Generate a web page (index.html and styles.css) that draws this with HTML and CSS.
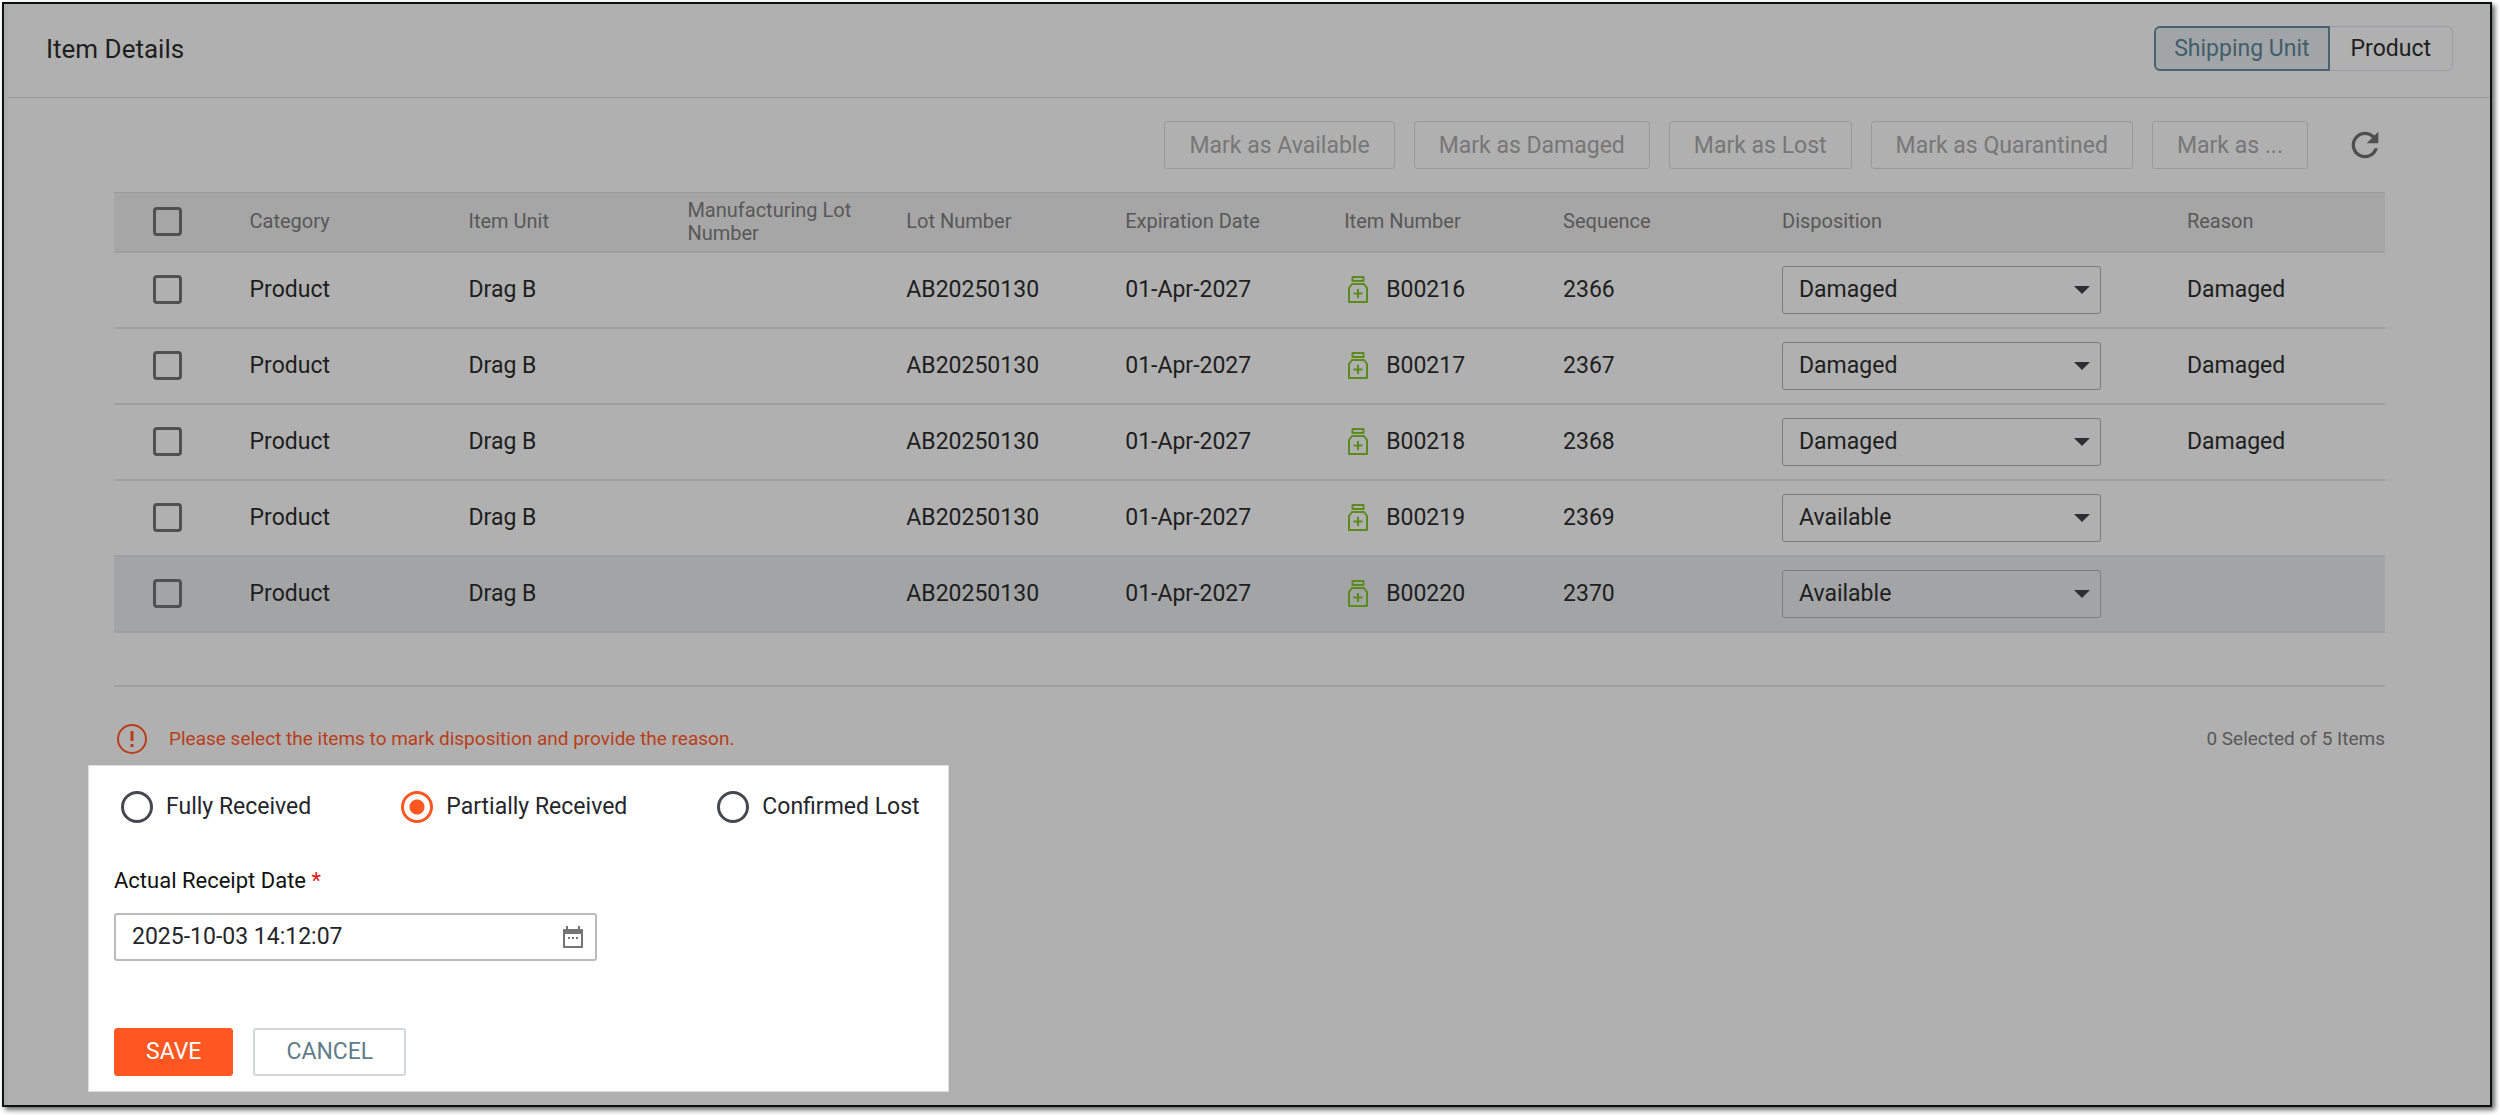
FILE: index.html
```html
<!DOCTYPE html>
<html lang="en">
<head>
    <meta charset="UTF-8">
    <meta name="viewport" content="width=device-width, initial-scale=1.0">
    <title>Item Details</title>
    <link rel="stylesheet" href="styles.css">
</head>
<body>
    <!-- shared icon for the item number column -->
    <svg width="0" height="0" class="icon-defs" aria-hidden="true">
        <symbol id="bottle" viewBox="0 1 28 28">
            <path d="M8.500 2h11v4h-11z M8 9h12l3 4v14H5V13z" fill="none" stroke="currentColor" stroke-width="2" stroke-linejoin="round"/>
            <path d="M14 14v9M9.500 18.500h9" fill="none" stroke="currentColor" stroke-width="2"/>
        </symbol>
    </svg>

    <div class="window">
        <header class="header">
            <h1>Item Details</h1>
            <div class="toggle">
                <button type="button" class="toggle-button active">Shipping Unit</button>
                <button type="button" class="toggle-button">Product</button>
            </div>
        </header>

        <main class="content">
            <div class="toolbar">
                <button type="button" class="mark-button" disabled>Mark as Available</button>
                <button type="button" class="mark-button" disabled>Mark as Damaged</button>
                <button type="button" class="mark-button" disabled>Mark as Lost</button>
                <button type="button" class="mark-button" disabled>Mark as Quarantined</button>
                <button type="button" class="mark-button" disabled>Mark as ...</button>
                <button type="button" class="refresh" aria-label="Refresh">
                    <svg width="40" height="40" viewBox="0 0 24 24"><path d="M17.650 6.350A7.958 7.958 0 0 0 12 4c-4.420 0-7.990 3.580-7.990 8s3.570 8 7.990 8c3.730 0 6.840-2.550 7.730-6h-2.080A5.990 5.990 0 0 1 12 18c-3.310 0-6-2.690-6-6s2.690-6 6-6c1.660 0 3.140.690 4.220 1.780L13 11h7V4z" fill="currentColor"/></svg>
                </button>
            </div>

            <table class="items">
                <colgroup>
                    <col class="col-check">
                    <col span="7" class="col-text">
                    <col class="col-disposition">
                    <col>
                </colgroup>
                <thead>
                    <tr>
                        <th><input type="checkbox" class="check" aria-label="Select all"></th>
                        <th>Category</th>
                        <th>Item Unit</th>
                        <th>Manufacturing Lot Number</th>
                        <th>Lot Number</th>
                        <th>Expiration Date</th>
                        <th>Item Number</th>
                        <th>Sequence</th>
                        <th>Disposition</th>
                        <th>Reason</th>
                    </tr>
                </thead>
                <tbody>
                    <tr>
                        <td><input type="checkbox" class="check" aria-label="Select B00216"></td>
                        <td>Product</td>
                        <td>Drag B</td>
                        <td></td>
                        <td>AB20250130</td>
                        <td>01-Apr-2027</td>
                        <td><span class="item-number"><svg width="28" height="28"><use href="#bottle"/></svg>B00216</span></td>
                        <td>2366</td>
                        <td><select class="disposition" aria-label="Disposition of B00216"><option selected>Damaged</option><option>Available</option></select></td>
                        <td>Damaged</td>
                    </tr>
                    <tr>
                        <td><input type="checkbox" class="check" aria-label="Select B00217"></td>
                        <td>Product</td>
                        <td>Drag B</td>
                        <td></td>
                        <td>AB20250130</td>
                        <td>01-Apr-2027</td>
                        <td><span class="item-number"><svg width="28" height="28"><use href="#bottle"/></svg>B00217</span></td>
                        <td>2367</td>
                        <td><select class="disposition" aria-label="Disposition of B00217"><option selected>Damaged</option><option>Available</option></select></td>
                        <td>Damaged</td>
                    </tr>
                    <tr>
                        <td><input type="checkbox" class="check" aria-label="Select B00218"></td>
                        <td>Product</td>
                        <td>Drag B</td>
                        <td></td>
                        <td>AB20250130</td>
                        <td>01-Apr-2027</td>
                        <td><span class="item-number"><svg width="28" height="28"><use href="#bottle"/></svg>B00218</span></td>
                        <td>2368</td>
                        <td><select class="disposition" aria-label="Disposition of B00218"><option selected>Damaged</option><option>Available</option></select></td>
                        <td>Damaged</td>
                    </tr>
                    <tr>
                        <td><input type="checkbox" class="check" aria-label="Select B00219"></td>
                        <td>Product</td>
                        <td>Drag B</td>
                        <td></td>
                        <td>AB20250130</td>
                        <td>01-Apr-2027</td>
                        <td><span class="item-number"><svg width="28" height="28"><use href="#bottle"/></svg>B00219</span></td>
                        <td>2369</td>
                        <td><select class="disposition" aria-label="Disposition of B00219"><option>Damaged</option><option selected>Available</option></select></td>
                        <td></td>
                    </tr>
                    <tr class="highlighted">
                        <td><input type="checkbox" class="check" aria-label="Select B00220"></td>
                        <td>Product</td>
                        <td>Drag B</td>
                        <td></td>
                        <td>AB20250130</td>
                        <td>01-Apr-2027</td>
                        <td><span class="item-number"><svg width="28" height="28"><use href="#bottle"/></svg>B00220</span></td>
                        <td>2370</td>
                        <td><select class="disposition" aria-label="Disposition of B00220"><option>Damaged</option><option selected>Available</option></select></td>
                        <td></td>
                    </tr>
                </tbody>
            </table>

            <div class="table-footer">
                <p class="error">
                    <svg width="36" height="36" viewBox="0 0 36 36"><circle cx="18" cy="18" r="14" fill="none" stroke="currentColor" stroke-width="2"/><path d="M18 10v10M18 23v3" stroke="currentColor" stroke-width="3"/></svg>
                    Please select the items to mark disposition and provide the reason.
                </p>
                <p class="selected-count">0 Selected of 5 Items</p>
            </div>
        </main>

        <form class="receipt">
            <div class="radios">
                <label><input type="radio" name="status" value="full"> Fully Received</label>
                <label><input type="radio" name="status" value="partial" checked> Partially Received</label>
                <label><input type="radio" name="status" value="lost"> Confirmed Lost</label>
            </div>
            <label class="date-label" for="receiptDate">Actual Receipt Date <span class="required">*</span></label>
            <div class="date-field">
                <input type="text" id="receiptDate" value="2025-10-03 14:12:07">
                <button type="button" class="calendar" aria-label="Open calendar">
                    <svg width="24" height="24" viewBox="0 0 24 24"><path d="M3 5h18v17H3z" fill="none" stroke="currentColor" stroke-width="2" stroke-linejoin="round"/><path d="M3 4h18v5H3zM5 1h2v4H5zM17 1h2v4h-2zM7 12h2v2H7zM11 12h2v2h-2zM15 12h2v2h-2z" fill="currentColor"/></svg>
                </button>
            </div>
            <div class="actions">
                <button type="button" class="save">SAVE</button>
                <button type="button" class="cancel">CANCEL</button>
            </div>
        </form>
    </div>
</body>
</html>
```
FILE: styles.css
```css
* {
    box-sizing: border-box;
}
body {
    font-family: Roboto, "Liberation Sans", sans-serif;
    font-size: 23px;
    margin: 0;
    padding: 2px 8px 8px 2px;
    background-color: white;
    color: #1e1e1e;
}
button, input, select {
    font: inherit;
    color: inherit;
    margin: 0;
}
button {
    cursor: pointer;
}
.icon-defs {
    position: absolute;
}
.window {
    min-height: calc(100vh - 10px);
    border: 2px solid #0c1010;
    background: linear-gradient(to right, #acacac 4px, #b0b0b0 4px);
    padding-left: 4px;
    box-shadow: 3px 3px 5px rgba(0, 0, 0, 0.6);
}
.header {
    display: flex;
    justify-content: space-between;
    align-items: center;
    height: 94px;
    padding: 0 37px 4px 38px;
    border-bottom: 1px solid #999;
}
.header h1 {
    margin: 0;
    font-size: 26px;
    font-weight: 400;
}
.toggle {
    display: flex;
}
.toggle-button {
    height: 45px;
    padding: 0 21px;
    background: none;
    border: 1px solid #9c9ca2;
    border-left: none;
    border-radius: 0 6px 6px 0;
}
.toggle-button.active {
    padding: 0 18px;
    background-color: #a2a5a7;
    border: 2px solid #4a6371;
    border-radius: 6px 0 0 6px;
    color: #425d6b;
}
.content {
    padding: 23px 105px 0 106px;
}
.toolbar {
    display: flex;
    justify-content: flex-end;
    align-items: center;
    gap: 19px;
    margin-bottom: 23px;
}
.mark-button {
    height: 48px;
    padding: 0 24px;
    background: none;
    border: 1px solid #999;
    border-radius: 3px;
    color: #777;
    cursor: default;
}
.refresh {
    display: flex;
    margin-left: 18px;
    padding: 0;
    background: none;
    border: none;
    color: #4f4f4f;
}
.items {
    width: 100%;
    table-layout: fixed;
    border-collapse: collapse;
}
.col-check {
    width: 5%;
}
.col-text {
    width: 9.64%;
}
.col-disposition {
    width: 17.83%;
}
.items th, .items td {
    padding: 0 22px;
    text-align: left;
    vertical-align: middle;
    border-bottom: 2px solid #9f9f9f;
}
.items th:first-child, .items td:first-child {
    padding: 0 0 0 39px;
}
.items th {
    height: 59px;
    background-color: #a6a6a6;
    border-top: 1px solid #999;
    color: #585858;
    font-size: 20px;
    font-weight: 400;
    line-height: 23px;
}
.items td {
    height: 76px;
}
.items .highlighted {
    background-color: #a2a4a6;
}
.check {
    display: block;
    appearance: none;
    width: 29px;
    height: 29px;
    border: 3px solid #505050;
    border-radius: 4px;
}
.item-number {
    display: flex;
    align-items: center;
    gap: 14px;
}
.item-number svg {
    color: #5b8a1d;
}
.disposition {
    display: block;
    appearance: none;
    width: 319px;
    max-width: 100%;
    height: 48px;
    padding: 0 16px;
    border: 1px solid #7c7c7c;
    border-radius: 3px;
    background: url('data:image/svg+xml,<svg xmlns="http://www.w3.org/2000/svg" width="16" height="8"><path d="M0 0h16l-8 8z" fill="%232c2e33"/></svg>') right 10px center no-repeat;
}
.table-footer {
    display: flex;
    justify-content: space-between;
    align-items: center;
    margin-top: 52px;
    padding: 34px 0 8px;
    border-top: 2px solid #9f9f9f;
    font-size: 19px;
}
.table-footer p {
    margin: 0;
}
.error {
    display: flex;
    align-items: center;
    gap: 19px;
    color: #b93d19;
}
.selected-count {
    color: #585858;
}
.receipt {
    width: 861px;
    max-width: 100%;
    margin-left: 80px;
    padding: 25px 25px 15px;
    border: 1px solid #ddd;
    background-color: white;
    color: #24262b;
}
.radios {
    display: flex;
    gap: 90px;
    padding-left: 7px;
    margin-bottom: 44px;
    white-space: nowrap;
}
.radios label {
    display: flex;
    align-items: center;
    gap: 13px;
}
.radios input {
    appearance: none;
    width: 32px;
    height: 32px;
    border: 3px solid #454850;
    border-radius: 50%;
}
.radios input:checked {
    border-color: #ff5722;
    background: radial-gradient(circle, #ff5722 7px, white 8px);
}
.date-label {
    display: block;
    margin-bottom: 18px;
    font-size: 22px;
    line-height: 28px;
    color: #111;
}
.required {
    color: #e02020;
}
.date-field {
    display: flex;
    align-items: center;
    width: 483px;
    height: 48px;
    border: 2px solid #bbb;
    border-radius: 3px;
}
.date-field input {
    flex: 1;
    min-width: 0;
    padding: 0 16px;
    border: none;
    background: none;
    outline: none;
}
.calendar {
    display: flex;
    margin-right: 10px;
    padding: 0;
    background: none;
    border: none;
    color: #757575;
}
.actions {
    display: flex;
    gap: 20px;
    margin-top: 67px;
}
.save, .cancel {
    height: 48px;
    padding: 0 31px;
    border: 1px solid #ff5722;
    border-radius: 3px;
    background-color: #ff5722;
    color: white;
}
.cancel {
    background-color: white;
    border: 2px solid #cfd8dc;
    color: #607d8b;
}
```
